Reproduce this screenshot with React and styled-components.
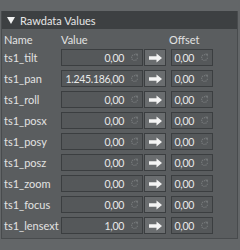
import React from "react"
import styled, { createGlobalStyle } from "styled-components"

const GlobalStyle = createGlobalStyle`
  html, body {
    margin: 0;
    padding: 0;
    background: #636668;
    font-family: "Lato", "Open Sans", sans-serif;
  }
`

const Page = styled.div`
  width: 240px;
  height: 250px;
  padding-top: 11px;
  box-sizing: border-box;
  overflow: hidden;
`

const Panel = styled.section`
  margin-left: 1px;
  width: 237px;
  height: 228px;
  box-sizing: border-box;
  background: #5a5d5f;
  border: 1px solid #484b4d;
  border-top: none;
`

const Header = styled.div`
  height: 18px;
  background: #3d4042;
  color: #e6e6e6;
  font-size: 11px;
  display: flex;
  align-items: center;
  padding-left: 5px;
  gap: 5px;
`

const Triangle = styled.span`
  width: 0;
  height: 0;
  border-left: 4px solid transparent;
  border-right: 4px solid transparent;
  border-top: 7px solid #f2f2f2;
`

const Grid = styled.div`
  display: grid;
  grid-template-columns: 56px 82px 22px 46px;
  column-gap: 1px;
  row-gap: 4px;
  padding: 4px 0 0 2px;
  color: #e2e2e2;
  font-size: 11px;
`

const ColLabel = styled.div`
  height: 12px;
  line-height: 14px;
  padding-left: ${p => p.$indent || 0}px;
`

const Name = styled.div`
  height: 17px;
  line-height: 17px;
`

const Field = styled.div`
  height: 17px;
  box-sizing: border-box;
  border: 1px solid #3b3e40;
  background: #55585a;
  display: flex;
  align-items: center;
  justify-content: flex-end;
  padding-right: 3px;
  gap: 6px;
  font-size: 10.5px;
  letter-spacing: -0.3px;
  color: #e8e8e8;
  margin-left: ${p => p.$shift || 0}px;
`

const ArrowButton = styled.div`
  height: 17px;
  box-sizing: border-box;
  border: 1px solid #3b3e40;
  background: #6a6d6f;
  display: flex;
  align-items: center;
  justify-content: center;
`

const Reset = () => (
  <svg width="9" height="9" viewBox="0 0 10 10">
    <path
      d="M8.2 5.2A3.2 3.2 0 1 1 6.6 2.3"
      fill="none"
      stroke="#747779"
      strokeWidth="1.4"
      strokeDasharray="1.4 0.9"
    />
    <path d="M5.6 0.6L9 0.9L8.4 4.2Z" fill="#747779" />
  </svg>
)

const Arrow = () => (
  <svg width="15" height="10" viewBox="0 0 15 10">
    <path d="M1 3.3H8.5V0.5L14 5L8.5 9.5V6.7H1Z" fill="#f4f4f4" />
  </svg>
)

const rows = [
  ["ts1_tilt", "0,00"],
  ["ts1_pan", "1.245.186,00"],
  ["ts1_roll", "0,00"],
  ["ts1_posx", "0,00"],
  ["ts1_posy", "0,00"],
  ["ts1_posz", "0,00"],
  ["ts1_zoom", "0,00"],
  ["ts1_focus", "0,00"],
  ["ts1_lensext", "1,00"],
]

export default function App() {
  return (
    <Page>
      <GlobalStyle />
      <Panel>
        <Header>
          <Triangle />
          Rawdata Values
        </Header>
        <Grid>
          <ColLabel>Name</ColLabel>
          <ColLabel>Value</ColLabel>
          <ColLabel />
          <ColLabel $indent={2}>Offset</ColLabel>
          {rows.map(([name, value]) => (
            <React.Fragment key={name}>
              <Name>{name}</Name>
              <Field>
                {value}
                <Reset />
              </Field>
              <ArrowButton>
                <Arrow />
              </ArrowButton>
              <Field $shift={4}>
                0,00
                <Reset />
              </Field>
            </React.Fragment>
          ))}
        </Grid>
      </Panel>
    </Page>
  )
}
